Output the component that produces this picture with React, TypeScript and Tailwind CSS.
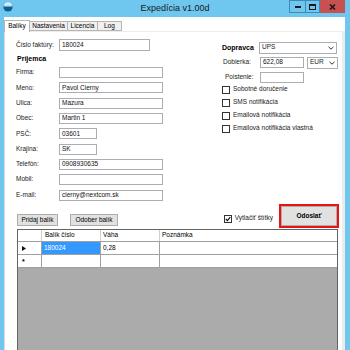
import React from "react";

function Chevron() {
  return (
    <svg width="6" height="4" viewBox="0 0 6 4" className="shrink-0">
      <path d="M0.5 0.8 L3 3.2 L5.5 0.8" stroke="#333" strokeWidth="1" fill="none" />
    </svg>
  );
}

function Input({ w, value, h = 11 }: { w: string; value?: string; h?: number }) {
  return (
    <div
      className={`${w} border border-[#abadb3] bg-white flex items-center pl-[2px] text-[6.5px] text-[#111] leading-none`}
      style={{ height: h }}
    >
      {value}
    </div>
  );
}

function Checkbox({ checked, label }: { checked?: boolean; label: string }) {
  return (
    <div className="flex items-center h-[13px]">
      <div className="w-[8px] h-[8px] border border-[#333] bg-white flex items-center justify-center">
        {checked && (
          <svg width="6" height="6" viewBox="0 0 6 6">
            <path d="M0.8 3 L2.4 4.6 L5.3 1.2" stroke="#111" strokeWidth="1.2" fill="none" />
          </svg>
        )}
      </div>
      <span className="ml-[3px] text-[6.5px] leading-none text-[#222]">{label}</span>
    </div>
  );
}

const leftRows: { label: string; value: string; w: string }[] = [
  { label: "Firma:", value: "", w: "w-[104px]" },
  { label: "Meno:", value: "Pavol Cierny", w: "w-[104px]" },
  { label: "Ulica:", value: "Mazura", w: "w-[104px]" },
  { label: "Obec:", value: "Martin 1", w: "w-[104px]" },
  { label: "PSČ:", value: "03601", w: "w-[38px]" },
  { label: "Krajina:", value: "SK", w: "w-[38px]" },
  { label: "Telefón:", value: "0908930635", w: "w-[104px]" },
  { label: "Mobil:", value: "", w: "w-[104px]" },
  { label: "E-mail:", value: "cierny@nextcom.sk", w: "w-[104px]" },
];

export default function App() {
  return (
    <div className="w-[350px] h-[350px] bg-[#6fc6ee] flex flex-col overflow-hidden font-['Liberation_Sans',Arial,sans-serif] text-black">
      {/* Title bar */}
      <div className="h-[17px] shrink-0 relative flex items-start">
        <div className="absolute left-[3px] top-[2px]">
          <svg width="10" height="10" viewBox="0 0 10 10">
            <circle cx="5" cy="5" r="4.6" fill="#0d5f8f" />
            <path d="M0.6 4.6 A4.4 4.4 0 0 1 9.4 4.6 Z" fill="#bfe6f7" />
            <path d="M2 3 A3 2 0 0 1 8 3" stroke="#ffffff" strokeWidth="0.8" fill="none" />
          </svg>
        </div>
        <div className="w-full text-center text-[9px] leading-none pt-[4px] text-[#1a1a1a]">Expedícia v1.00d</div>
        <div className="absolute right-[5px] top-0 flex">
          <div className="w-[16px] h-[13px] border border-[#3d8bb5] border-r-0 flex items-end justify-center pb-[4px]">
            <div className="w-[6px] h-[2px] bg-[#1b1b1b]" />
          </div>
          <div className="w-[15px] h-[13px] border border-[#3d8bb5] flex items-center justify-center">
            <div className="w-[7px] h-[6px] border-[1.5px] border-t-[2px] border-[#1b1b1b]" />
          </div>
          <div className="w-[25px] h-[13px] bg-[#c75050] flex items-center justify-center">
            <svg width="7" height="6" viewBox="0 0 7 6">
              <path d="M1 0.5 L6 5.5 M6 0.5 L1 5.5" stroke="#1b1b1b" strokeWidth="1.6" />
            </svg>
          </div>
        </div>
      </div>

      {/* Client area */}
      <div className="flex-1 ml-[4px] mr-[5px] bg-white flex flex-col pt-[2px]">
        {/* Tabs */}
        <div className="h-[12px] flex items-end text-[6.5px] leading-none">
          <div className="h-[12px] w-[26px] border border-b-0 border-[#b5b5b5] bg-white flex items-center justify-center relative z-10 -mb-px">Balíky</div>
          <div className="h-[10px] w-[38px] border border-l-0 border-[#b5b5b5] bg-[#f0f0f0] flex items-center justify-center">Nastavenia</div>
          <div className="h-[10px] w-[30px] border border-l-0 border-[#b5b5b5] bg-[#f0f0f0] flex items-center justify-center">Licencia</div>
          <div className="h-[10px] w-[24px] border border-l-0 border-[#b5b5b5] bg-[#f0f0f0] flex items-center pl-[6px]">Log</div>
        </div>
        {/* Tab page */}
        <div className="flex-1 border-l border-t border-r-[3px] border-[#ececec] border-l-[#e8d8d8] bg-white flex flex-col relative">
          <div className="flex h-[172px]">
            {/* Left column */}
            <div className="pl-[11px] pt-[7px] w-[200px] text-[6.5px] leading-none text-[#222]">
              <div className="flex items-center h-[12px]">
                <span className="w-[43px]">Číslo faktúry:</span>
                <Input w="w-[91px]" value="180024" h={12} />
              </div>
              <div className="h-[14px] flex items-center pl-[1px] font-bold text-[7px] text-black">Príjemca</div>
              {leftRows.map((r) => (
                <div key={r.label} className="flex items-center h-[15.3px]">
                  <span className="w-[43px]">{r.label}</span>
                  <Input w={r.w} value={r.value} />
                </div>
              ))}
            </div>
            {/* Right column */}
            <div className="pt-[9px] pl-[17px] text-[6.5px] leading-none text-[#222]">
              <div className="flex items-center h-[13px]">
                <span className="w-[37px] font-bold text-[7px] text-black">Dopravca</span>
                <div className="w-[78px] h-[12px] border border-[#abadb3] bg-white flex items-center justify-between px-[2px]">
                  <span>UPS</span>
                  <Chevron />
                </div>
              </div>
              <div className="flex items-center h-[15px] mt-[1px]">
                <span className="w-[38px] pl-[1px]">Dobierka:</span>
                <Input w="w-[44px]" value="622,08" />
                <div className="ml-[3px] w-[31px] h-[12px] border border-[#abadb3] bg-white flex items-center justify-between px-[2px]">
                  <span>EUR</span>
                  <Chevron />
                </div>
              </div>
              <div className="flex items-center h-[14px]">
                <span className="w-[38px] pl-[3px]">Poistenie:</span>
                <Input w="w-[44px]" />
              </div>
              <div className="-mt-[1px]">
                <Checkbox label="Sobotné doručenie" />
                <Checkbox label="SMS notifikácia" />
                <Checkbox label="Emailová notifikácia" />
                <Checkbox label="Emailová notifikácia vlastná" />
              </div>
            </div>
          </div>

          {/* Buttons row */}
          <div className="h-[24px] flex items-end pl-[12px] pr-[3px]">
            <div className="flex gap-[12px] mb-[2px] text-[6.5px] leading-none">
              <div className="w-[41px] h-[12px] border border-[#adadad] bg-[#e1e1e1] flex items-center justify-center">Pridaj balík</div>
              <div className="w-[48px] h-[12px] border border-[#adadad] bg-[#e1e1e1] flex items-center justify-center">Odober balík</div>
            </div>
            <div className="ml-auto flex items-end">
              <div className="mb-[3px] mr-[6px]">
                <Checkbox checked label="Vytlačiť štítky" />
              </div>
              <div className="w-[60px] h-[24px] border-[2px] border-[#ee1111] flex">
                <div className="flex-1 border border-[#adadad] bg-[#e1e1e1] flex items-center justify-center text-[6.5px] font-bold leading-none">Odoslať</div>
              </div>
            </div>
          </div>

          {/* Grid */}
          <div className="flex-1 mt-[1px] ml-[12px] mr-[4px] border border-[#646464] border-b-0 bg-[#ababab] flex flex-col text-[6.5px] leading-none">
            <div className="flex h-[12px] bg-white border-b border-[#a0a0a0]">
              <div className="w-[24px] border-r border-[#d0d0d0]" />
              <div className="w-[59px] border-r border-[#d0d0d0] flex items-center pl-[3px]">Balík číslo</div>
              <div className="w-[59px] border-r border-[#d0d0d0] flex items-center pl-[2px]">Váha</div>
              <div className="flex-1 flex items-center pl-[2px]">Poznámka</div>
            </div>
            <div className="flex h-[13px] bg-white border-b border-[#a0a0a0]">
              <div className="w-[24px] border-r border-[#a0a0a0] flex items-center pl-[4px]">
                <svg width="4" height="5" viewBox="0 0 4 5">
                  <path d="M0 0 L4 2.5 L0 5 Z" fill="#111" />
                </svg>
              </div>
              <div className="w-[59px] border-r border-[#a0a0a0] bg-[#3399ff] text-white flex items-center pl-[2px]">180024</div>
              <div className="w-[59px] border-r border-[#a0a0a0] flex items-center pl-[2px]">0,28</div>
              <div className="flex-1" />
            </div>
            <div className="flex h-[13px] bg-white border-b border-[#a0a0a0]">
              <div className="w-[24px] border-r border-[#a0a0a0] flex items-center pl-[4px] text-[7px] font-bold">*</div>
              <div className="w-[59px] border-r border-[#a0a0a0]" />
              <div className="w-[59px] border-r border-[#a0a0a0]" />
              <div className="flex-1" />
            </div>
          </div>
        </div>
      </div>
    </div>
  );
}
